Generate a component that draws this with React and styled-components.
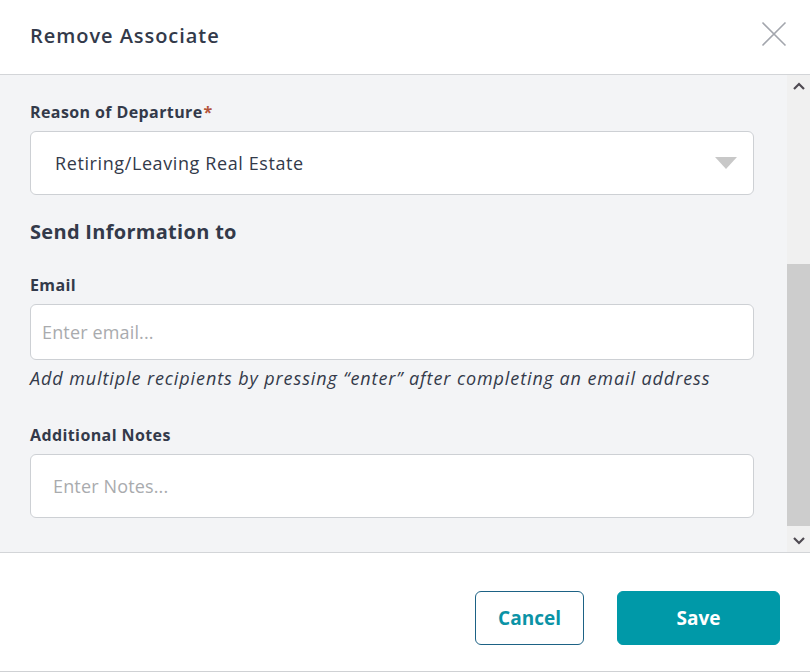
import React from "react";
import styled, { createGlobalStyle } from "styled-components";

const Global = createGlobalStyle`
  html, body { margin: 0; padding: 0; background: #fff; }
  body { font-family: "Open Sans", "Noto Sans", sans-serif; color: #333a48; }
  * { box-sizing: border-box; }
`;

const Modal = styled.div`
  width: 810px;
  height: 672px;
  display: flex;
  flex-direction: column;
  background: #fff;
  border-bottom: 1px solid #cfd1d4;
`;

const Header = styled.header`
  height: 75px;
  flex: none;
  display: flex;
  align-items: center;
  justify-content: space-between;
  padding: 0 23px 0 30px;
  border-bottom: 1px solid #d3d5d8;
`;

const Title = styled.h1`
  margin: -4px 0 0;
  font-size: 20px;
  font-weight: 600;
  letter-spacing: 0.95px;
  color: #333a4a;
`;

const CloseButton = styled.button`
  border: 0;
  background: none;
  padding: 0;
  width: 26px;
  height: 26px;
  margin-top: -6px;
  display: flex;
  cursor: pointer;
`;

const Body = styled.div`
  height: 478px;
  flex: none;
  display: flex;
  background: #f3f4f6;
  border-bottom: 1px solid #d3d5d8;
`;

const Content = styled.div`
  flex: 1;
  padding: 27px 33px 0 30px;
  display: flex;
  flex-direction: column;
`;

const Scrollbar = styled.div`
  width: 23px;
  flex: none;
  display: flex;
  flex-direction: column;
  background: #f0f0f0;
`;

const ScrollArrow = styled.div`
  height: 22px;
  display: flex;
  align-items: center;
  justify-content: center;
`;

const ScrollTrack = styled.div`
  flex: 1;
  display: flex;
  flex-direction: column;
  padding-top: 167px;
  padding-bottom: 4px;
`;

const Thumb = styled.div`
  flex: 1;
  background: #cdcdcd;
`;

const Label = styled.label`
  display: block;
  font-size: 16px;
  font-weight: 700;
  letter-spacing: 0.4px;
  color: #333a4a;
  margin: ${(p) => p.$mt || 0}px 0 9px;
  line-height: 20px;
`;

const Required = styled.span`
  color: #b4533a;
  margin-left: 1px;
`;

const SectionTitle = styled.h2`
  margin: 24px 0 0;
  font-size: 20px;
  font-weight: 700;
  letter-spacing: 0.3px;
  line-height: 26px;
  color: #333a4a;
`;

const Field = styled.div`
  height: ${(p) => p.$h}px;
  background: #fff;
  border: 1px solid #cdd0d4;
  border-radius: 6px;
  display: flex;
  align-items: center;
  justify-content: space-between;
  padding: 0 16px 0 ${(p) => p.$pl}px;
  font-size: 18px;
  letter-spacing: ${(p) => (p.$placeholder ? "0.15px" : "0.6px")};
  color: ${(p) => (p.$placeholder ? "#a9abae" : "#333a4a")};
`;

const Caret = styled.span`
  width: 0;
  height: 0;
  border-left: 11px solid transparent;
  border-right: 11px solid transparent;
  border-top: 12px solid #c8c8c8;
`;

const Hint = styled.p`
  margin: 7px 0 0;
  font-size: 18px;
  font-style: italic;
  letter-spacing: 0.9px;
  line-height: 22px;
  color: #333a4a;
`;

const Footer = styled.footer`
  flex: 1;
  display: flex;
  justify-content: flex-end;
  align-items: flex-start;
  gap: 33px;
  padding: 38px 30px 0 0;
`;

const Button = styled.button`
  height: 54px;
  width: ${(p) => p.$w}px;
  border-radius: 6px;
  font-family: inherit;
  font-size: 19px;
  font-weight: 700;
  cursor: pointer;
  border: 1px solid ${(p) => (p.$primary ? "#0099a8" : "#1d6285")};
  background: ${(p) => (p.$primary ? "#0099a8" : "#fff")};
  color: ${(p) => (p.$primary ? "#fff" : "#0b93a6")};
`;

export default function App() {
  return (
    <>
      <Global />
      <Modal>
        <Header>
          <Title>Remove Associate</Title>
          <CloseButton aria-label="Close">
            <svg width="26" height="26" viewBox="0 0 26 26">
              <path d="M1.5 1.5 L24.5 24.5 M24.5 1.5 L1.5 24.5" stroke="#a3a6ad" strokeWidth="1.6" fill="none" />
            </svg>
          </CloseButton>
        </Header>
        <Body>
          <Content>
            <Label>
              Reason of Departure<Required>*</Required>
            </Label>
            <Field $h={64} $pl={24}>
              Retiring/Leaving Real Estate
              <Caret />
            </Field>
            <SectionTitle>Send Information to</SectionTitle>
            <Label $mt={30}>Email</Label>
            <Field $h={56} $pl={11} $placeholder>
              Enter email...
            </Field>
            <Hint>Add multiple recipients by pressing “enter” after completing an email address</Hint>
            <Label $mt={36}>Additional Notes</Label>
            <Field $h={64} $pl={22} $placeholder>
              Enter Notes...
            </Field>
          </Content>
          <Scrollbar>
            <ScrollArrow>
              <svg width="12" height="8" viewBox="0 0 12 8">
                <path d="M1 7 L6 2 L11 7" stroke="#4f4a52" strokeWidth="2.2" fill="none" />
              </svg>
            </ScrollArrow>
            <ScrollTrack>
              <Thumb />
            </ScrollTrack>
            <ScrollArrow>
              <svg width="12" height="8" viewBox="0 0 12 8">
                <path d="M1 1 L6 6 L11 1" stroke="#4f4a52" strokeWidth="2.2" fill="none" />
              </svg>
            </ScrollArrow>
          </Scrollbar>
        </Body>
        <Footer>
          <Button $w={109}>Cancel</Button>
          <Button $w={163} $primary>
            Save
          </Button>
        </Footer>
      </Modal>
    </>
  );
}
